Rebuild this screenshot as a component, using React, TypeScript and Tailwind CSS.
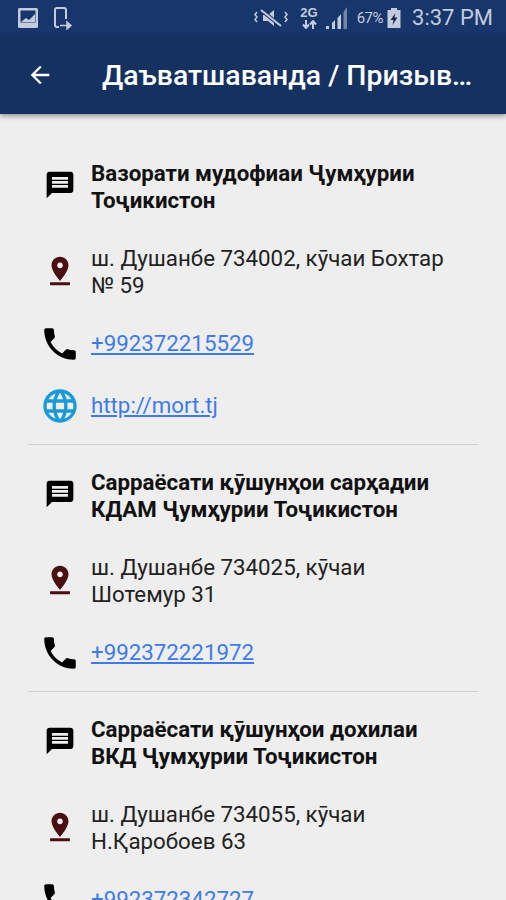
import { MdArrowBack, MdLanguage, MdMessage, MdPhone, MdPinDrop } from "react-icons/md";

interface Contact {
  name: string[];
  address: string[];
  phone: string;
  web?: string;
}

const contacts: Contact[] = [
  {
    name: ["Вазорати мудофиаи Ҷумҳурии", "Тоҷикистон"],
    address: ["ш. Душанбе 734002, кӯчаи Бохтар", "№ 59"],
    phone: "+992372215529",
    web: "http://mort.tj",
  },
  {
    name: ["Сарраёсати қӯшунҳои сарҳадии", "КДАМ Ҷумҳурии Тоҷикистон"],
    address: ["ш. Душанбе 734025, кӯчаи", "Шотемур 31"],
    phone: "+992372221972",
  },
  {
    name: ["Сарраёсати қӯшунҳои дохилаи", "ВКД Ҷумҳурии Тоҷикистон"],
    address: ["ш. Душанбе 734055, кӯчаи", "Н.Қаробоев 63"],
    phone: "+992372342727",
  },
];

function StatusBar() {
  return (
    <div className="h-[36px] bg-[#17366b] flex items-center pl-[17px] pr-[13px] text-[#c3cbdc]">
      <svg width="22" height="22" viewBox="0 0 22 22" className="mr-[13px]">
        <rect x="1" y="1" width="20" height="20" rx="1.500" fill="#c3cbdc" />
        <rect x="3.500" y="3.500" width="15" height="12" fill="#17366b" />
        <path d="M4 15l5-4 3 2 6-6v8z" fill="#c3cbdc" />
      </svg>
      <svg width="22" height="24" viewBox="0 0 22 24">
        <path d="M3 4a2 2 0 0 1 2-2h7a2 2 0 0 1 2 2V13M3 4V19a2 2 0 0 0 2 2H7" fill="none" stroke="#c3cbdc" strokeWidth="2" />
        <path d="M8 19.500h7M15 16l4 3.500-4 3.500z" fill="#c3cbdc" stroke="#c3cbdc" strokeWidth="1.500" />
      </svg>
      <div className="flex-1" />
      <svg width="34" height="22" viewBox="0 0 34 22" className="mr-[12px]">
        <path d="M9 8h5l6-5v16l-6-5H9z" fill="#c3cbdc" />
        <path d="M7 3l20 16" stroke="#17366b" strokeWidth="4" />
        <path d="M7 3l20 16" stroke="#c3cbdc" strokeWidth="2" />
        <path d="M3 5l-2 2.500 2 2.500-2 2.500 2 2.500M31 5l2 2.500-2 2.500 2 2.500-2 2.500" fill="none" stroke="#c3cbdc" strokeWidth="1.500" />
      </svg>
      <div className="flex flex-col items-center gap-[2px] mr-[7px] font-['Liberation_Sans',sans-serif]">
        <span className="text-[13px] leading-[11px] font-bold">2G</span>
        <svg width="15" height="9" viewBox="0 0 15 9">
          <path d="M4 0v6M1 4.500L4 8l3-3.500M11 9V2M8 4.500L11 1l3 3.500" fill="none" stroke="#c3cbdc" strokeWidth="2" />
        </svg>
      </div>
      <svg width="24" height="26" viewBox="0 0 24 26" className="mr-[8px]">
        <rect x="1" y="21" width="3" height="3" fill="#c3cbdc" />
        <path d="M7 24v-6l3-3v9z" fill="#c3cbdc" />
        <path d="M12.500 24V13l3.500-4v15z" fill="#c3cbdc" />
        <path d="M18.500 24V7l3.500-5v22z" fill="#7486a8" />
      </svg>
      <span className="text-[15px] tracking-[-0.5px] mr-[4px]">67%</span>
      <svg width="14" height="24" viewBox="0 0 14 24" className="mr-[11px]">
        <rect x="4" y="2" width="6" height="3" fill="#c3cbdc" />
        <rect x="0.500" y="4" width="13" height="18" fill="#c3cbdc" />
        <path d="M8.500 7L3.500 14h3l-1 5 5-7.500h-3z" fill="#1a2a4a" />
      </svg>
      <span className="text-[22px] leading-none">3:37 PM</span>
    </div>
  );
}

function Toolbar() {
  return (
    <div className="h-[78px] bg-[#14315f] flex items-center shadow-[0_2px_5px_rgba(0,0,0,0.4)] relative">
      <MdArrowBack className="text-white text-[28px] ml-[26px] mr-[48px] shrink-0" />
      <span className="text-white text-[28.4px] font-medium leading-none whitespace-nowrap mt-[3px]">
        Даъватшаванда / Призыв…
      </span>
    </div>
  );
}

function Row({ icon, children, className }: { icon: React.ReactNode; children: React.ReactNode; className: string }) {
  return (
    <div className={`flex items-center ${className}`}>
      <div className="w-[63px] h-[27px] flex items-center justify-center shrink-0">{icon}</div>
      <div className="text-[22.3px] leading-[27px] whitespace-nowrap">{children}</div>
    </div>
  );
}

function ContactBlock({ contact, last }: { contact: Contact; last: boolean }) {
  return (
    <div className={last ? "" : "border-b border-[#d0d0d0] pb-[25px] mb-[24px]"}>
      <Row icon={<MdMessage className="text-black text-[32px] shrink-0 mt-[-4px]" />} className="mb-[31px]">
        <div className="font-bold text-[#111]">
          {contact.name.map((line) => (
            <div key={line}>{line}</div>
          ))}
        </div>
      </Row>
      <Row icon={<MdPinDrop className="text-[#4a0f10] text-[34px] shrink-0 mt-[-2px]" />} className="mb-[31px]">
        <div className="text-[#222]">
          {contact.address.map((line) => (
            <div key={line}>{line}</div>
          ))}
        </div>
      </Row>
      <Row icon={<MdPhone className="text-black text-[42px] shrink-0" />} className="">
        <a href={`tel:${contact.phone}`} className="text-[#3f7be8] underline">
          {contact.phone}
        </a>
      </Row>
      {contact.web && (
        <Row icon={<MdLanguage className="text-[#1a9ad6] text-[40px] shrink-0" />} className="mt-[35px]">
          <a href={contact.web} className="text-[#3f7be8] underline">
            {contact.web}
          </a>
        </Row>
      )}
    </div>
  );
}

export default function App() {
  return (
    <div className="w-[506px] h-[900px] overflow-hidden bg-[#eeeeee] font-['Roboto',sans-serif]">
      <StatusBar />
      <Toolbar />
      <div className="px-[28px] pt-[46px]">
        {contacts.map((c, i) => (
          <ContactBlock key={c.phone} contact={c} last={i === contacts.length - 1} />
        ))}
      </div>
    </div>
  );
}
